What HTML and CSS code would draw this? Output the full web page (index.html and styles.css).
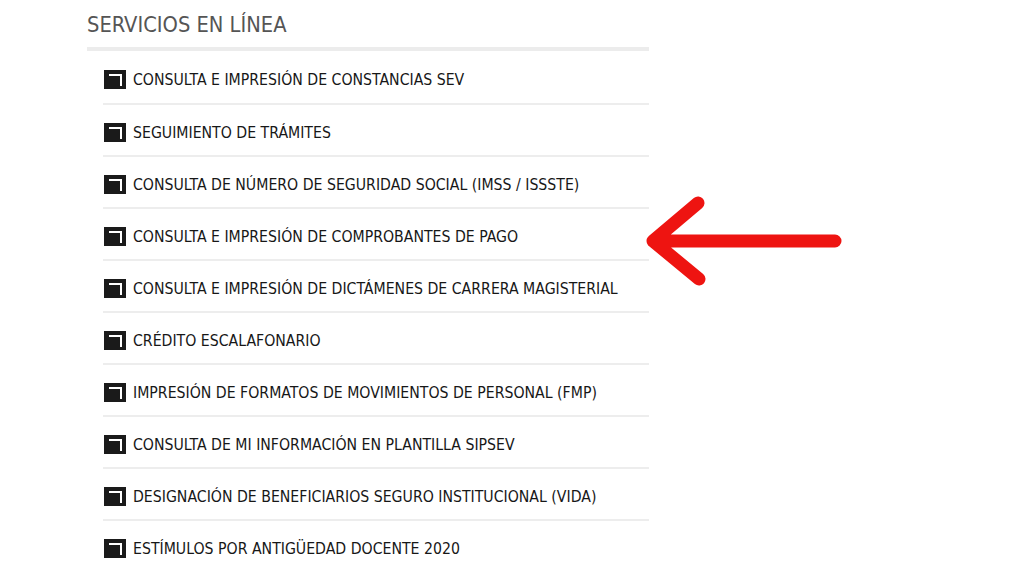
FILE: index.html
```html
<!DOCTYPE html>
<html lang="es">
<head>
<meta charset="utf-8">
<title>Servicios en línea</title>
<link rel="stylesheet" href="styles.css">
</head>
<body>
<section class="panel">
  <h2 class="title">SERVICIOS EN LÍNEA</h2>
  <ul class="list">
    <li class="item"><span class="ico"></span><span class="label">CONSULTA E IMPRESIÓN DE CONSTANCIAS SEV</span></li>
    <li class="item"><span class="ico"></span><span class="label">SEGUIMIENTO DE TRÁMITES</span></li>
    <li class="item"><span class="ico"></span><span class="label">CONSULTA DE NÚMERO DE SEGURIDAD SOCIAL (IMSS / ISSSTE)</span></li>
    <li class="item"><span class="ico"></span><span class="label">CONSULTA E IMPRESIÓN DE COMPROBANTES DE PAGO</span></li>
    <li class="item"><span class="ico"></span><span class="label">CONSULTA E IMPRESIÓN DE DICTÁMENES DE CARRERA MAGISTERIAL</span></li>
    <li class="item"><span class="ico"></span><span class="label">CRÉDITO ESCALAFONARIO</span></li>
    <li class="item"><span class="ico"></span><span class="label">IMPRESIÓN DE FORMATOS DE MOVIMIENTOS DE PERSONAL (FMP)</span></li>
    <li class="item"><span class="ico"></span><span class="label">CONSULTA DE MI INFORMACIÓN EN PLANTILLA SIPSEV</span></li>
    <li class="item"><span class="ico"></span><span class="label">DESIGNACIÓN DE BENEFICIARIOS SEGURO INSTITUCIONAL (VIDA)</span></li>
    <li class="item"><span class="ico"></span><span class="label">ESTÍMULOS POR ANTIGÜEDAD DOCENTE 2020</span></li>
  </ul>
</section>
<svg class="arrow" width="210" height="100" viewBox="0 0 210 100" aria-hidden="true">
  <path d="M10 50 H192 M55 12 L10 50 L56 88" fill="none" stroke="#ee1411" stroke-width="13" stroke-linecap="round" stroke-linejoin="round"/>
</svg>
</body>
</html>
```
FILE: styles.css
```css
html, body {
  margin: 0;
  padding: 0;
  background: #ffffff;
}
body {
  position: relative;
  width: 1024px;
  height: 576px;
  overflow: hidden;
  font-family: "DejaVu Sans", sans-serif;
  font-stretch: condensed;
}
.panel {
  width: 562px;
  margin-left: 87px;
  padding-top: 11px;
}
.title {
  margin: 0;
  padding-bottom: 8px;
  font-size: 21.7px;
  font-weight: normal;
  color: #555;
  line-height: 28px;
  border-bottom: 4px solid #ececec;
}
.list {
  list-style: none;
  margin: 0 0 0 16px;
  padding: 0;
}
.item {
  display: flex;
  align-items: center;
  height: 50px;
  border-bottom: 2px solid #ededed;
}
.item:first-child {
  height: 52px;
}
.item:last-child {
  border-bottom: none;
}
.ico {
  position: relative;
  top: 2px;
  flex: none;
  width: 22px;
  height: 19px;
  margin-left: 1px;
  margin-right: 7px;
  background: #1a1a1a;
}
.ico::after {
  content: "";
  position: absolute;
  left: 5px;
  top: 4px;
  width: 11px;
  height: 10px;
  border-top: 2px solid #fff;
  border-right: 2px solid #fff;
}
.label {
  font-size: 15.7px;
  color: #171717;
  line-height: 20px;
  position: relative;
  top: 3px;
}
.arrow {
  position: absolute;
  left: 643px;
  top: 191px;
}
```
